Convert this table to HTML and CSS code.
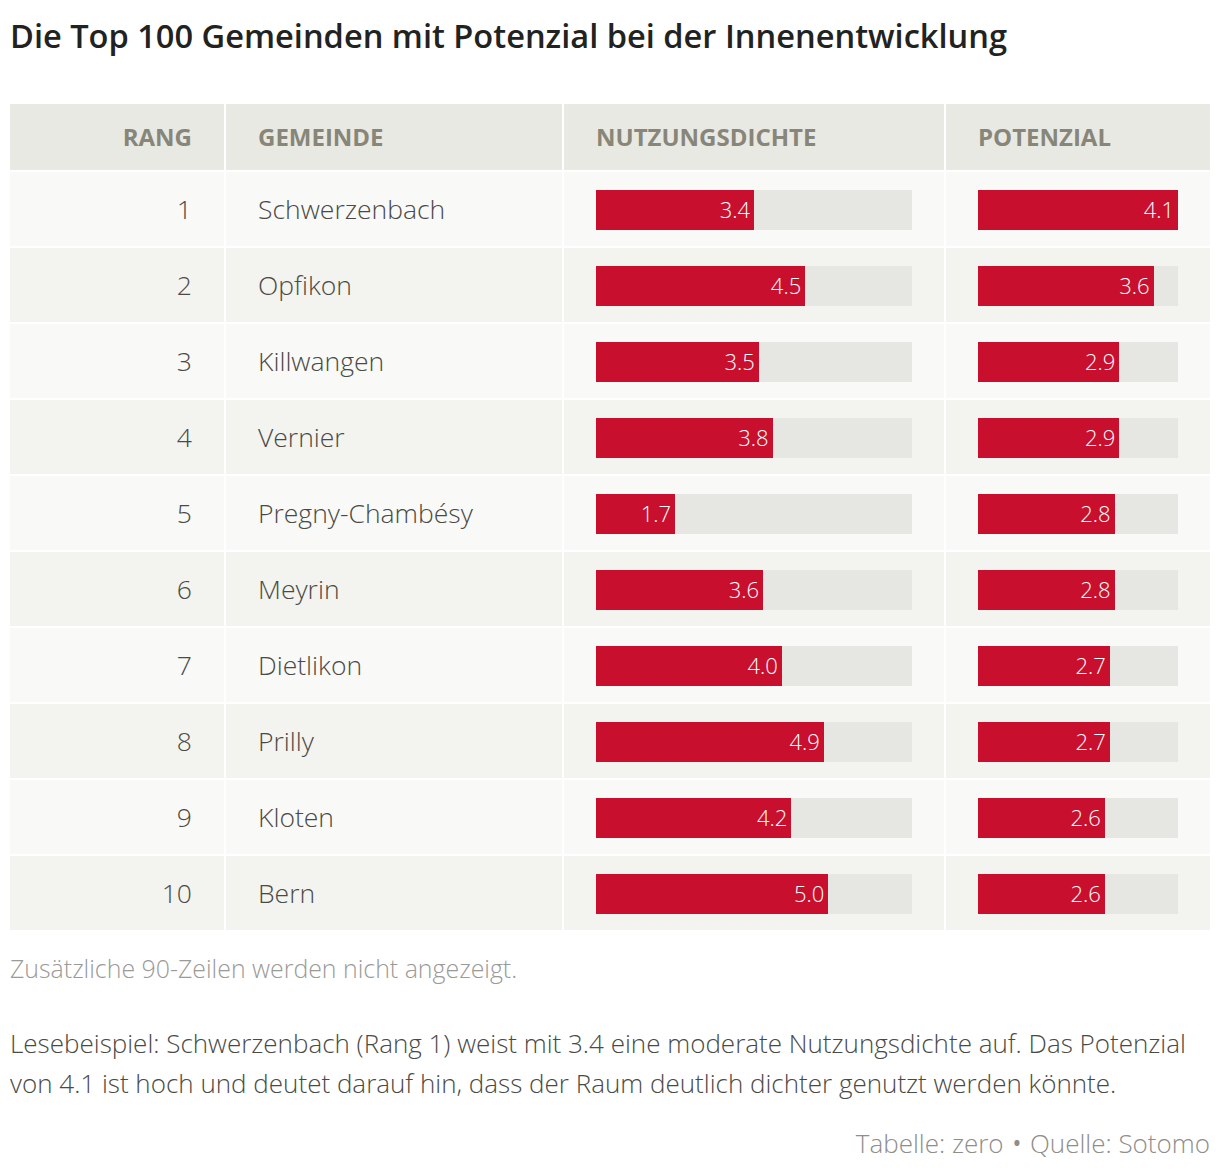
FILE: index.html
```html
<!DOCTYPE html>
<html lang="de">
<head>
<meta charset="utf-8">
<title>Top 100 Gemeinden</title>
<link rel="stylesheet" href="styles.css">
</head>
<body>
<div class="page">
  <h1 class="title">Die Top 100 Gemeinden mit Potenzial bei der Innenentwicklung</h1>
  <div class="table">
    <div class="th rang">RANG</div>
    <div class="th">GEMEINDE</div>
    <div class="th">NUTZUNGSDICHTE</div>
    <div class="th">POTENZIAL</div>

    <div class="td rang odd">1</div><div class="td odd">Schwerzenbach</div>
    <div class="td odd"><div class="track"><div class="fill" style="width:50%">3.4</div></div></div>
    <div class="td odd"><div class="track"><div class="fill" style="width:100%">4.1</div></div></div>

    <div class="td rang even">2</div><div class="td even">Opfikon</div>
    <div class="td even"><div class="track"><div class="fill" style="width:66.2%">4.5</div></div></div>
    <div class="td even"><div class="track"><div class="fill" style="width:87.8%">3.6</div></div></div>

    <div class="td rang odd">3</div><div class="td odd">Killwangen</div>
    <div class="td odd"><div class="track"><div class="fill" style="width:51.5%">3.5</div></div></div>
    <div class="td odd"><div class="track"><div class="fill" style="width:70.7%">2.9</div></div></div>

    <div class="td rang even">4</div><div class="td even">Vernier</div>
    <div class="td even"><div class="track"><div class="fill" style="width:55.9%">3.8</div></div></div>
    <div class="td even"><div class="track"><div class="fill" style="width:70.7%">2.9</div></div></div>

    <div class="td rang odd">5</div><div class="td odd">Pregny-Chambésy</div>
    <div class="td odd"><div class="track"><div class="fill" style="width:25%">1.7</div></div></div>
    <div class="td odd"><div class="track"><div class="fill" style="width:68.3%">2.8</div></div></div>

    <div class="td rang even">6</div><div class="td even">Meyrin</div>
    <div class="td even"><div class="track"><div class="fill" style="width:52.9%">3.6</div></div></div>
    <div class="td even"><div class="track"><div class="fill" style="width:68.3%">2.8</div></div></div>

    <div class="td rang odd">7</div><div class="td odd">Dietlikon</div>
    <div class="td odd"><div class="track"><div class="fill" style="width:58.8%">4.0</div></div></div>
    <div class="td odd"><div class="track"><div class="fill" style="width:65.9%">2.7</div></div></div>

    <div class="td rang even">8</div><div class="td even">Prilly</div>
    <div class="td even"><div class="track"><div class="fill" style="width:72.1%">4.9</div></div></div>
    <div class="td even"><div class="track"><div class="fill" style="width:65.9%">2.7</div></div></div>

    <div class="td rang odd">9</div><div class="td odd">Kloten</div>
    <div class="td odd"><div class="track"><div class="fill" style="width:61.8%">4.2</div></div></div>
    <div class="td odd"><div class="track"><div class="fill" style="width:63.4%">2.6</div></div></div>

    <div class="td rang even">10</div><div class="td even">Bern</div>
    <div class="td even"><div class="track"><div class="fill" style="width:73.5%">5.0</div></div></div>
    <div class="td even"><div class="track"><div class="fill" style="width:63.4%">2.6</div></div></div>
  </div>
  <p class="note">Zusätzliche 90-Zeilen werden nicht angezeigt.</p>
  <p class="desc">Lesebeispiel: Schwerzenbach (Rang 1) weist mit 3.4 eine moderate Nutzungsdichte auf. Das Potenzial von 4.1 ist hoch und deutet darauf hin, dass der Raum deutlich dichter genutzt werden könnte.</p>
  <p class="source">Tabelle: zero <span class="dot">•</span> Quelle: Sotomo</p>
</div>
</body>
</html>
```
FILE: styles.css
```css
* { box-sizing: border-box; }
html, body { margin: 0; padding: 0; background: #ffffff; }
body { font-family: "Open Sans", "Noto Sans", sans-serif; color: #4a4a45; }
.page { padding: 14px 10px 0 10px; }
.title {
  margin: 0;
  font-size: 32.6px;
  font-weight: 600;
  line-height: 44px;
  color: #222220;
  letter-spacing: 0;
}
.table {
  margin-top: 46px;
  display: grid;
  grid-template-columns: 214px 336px 380px 264px;
  grid-auto-rows: 74px;
  grid-template-rows: 66px;
  column-gap: 2px;
  row-gap: 2px;
  background: #ffffff;
}
.th {
  background: #e9e9e4;
  color: #878678;
  font-weight: 700;
  font-size: 24px;
  letter-spacing: 0;
  display: flex;
  align-items: center;
  padding: 0 32px 2px 32px;
}
.td {
  display: flex;
  align-items: center;
  padding: 0 32px;
  font-size: 26.5px;
  font-weight: 300;
  color: #4a4a45;
}
.rang { justify-content: flex-end; }
.odd { background: #f9f9f7; }
.even { background: #f3f3ef; }
.track {
  width: 100%;
  height: 40px;
  margin-top: 2px;
  background: #e6e6e3;
  display: flex;
}
.fill {
  height: 100%;
  background: #c8102e;
  color: #ffffff;
  font-size: 22px;
  font-weight: 300;
  display: flex;
  align-items: center;
  justify-content: flex-end;
  padding: 0 4px 2px 0;
}
.note {
  margin: 23px 0 0 0;
  font-size: 24.9px;
  font-weight: 300;
  color: #9a9a96;
  line-height: 30px;
}
.desc {
  margin: 40px 0 0 0;
  font-size: 26px;
  font-weight: 300;
  line-height: 40px;
  color: #4a4a45;
}
.source {
  margin: 22px 0 0 0;
  text-align: right;
  font-size: 26px;
  font-weight: 300;
  color: #8e8e8a;
  line-height: 36px;
}
.dot { font-size: 34px; line-height: 0; vertical-align: -3px; }
```
